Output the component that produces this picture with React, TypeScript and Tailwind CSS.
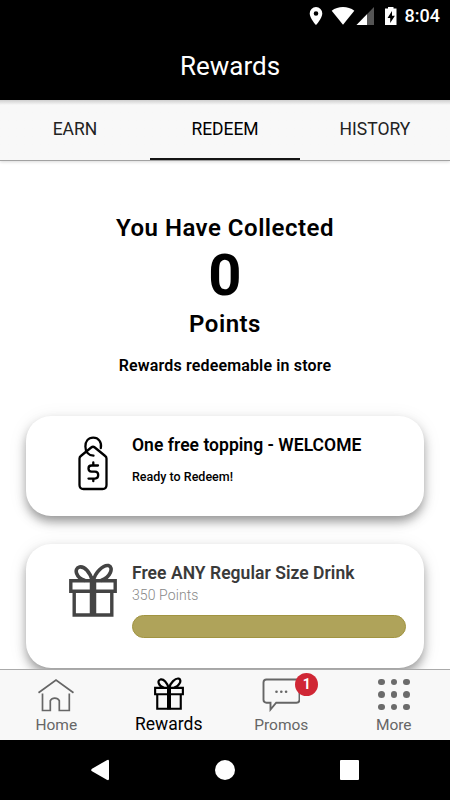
import { ReactNode } from "react";
import clsx from "clsx";

const GiftIcon = ({ className }: { className?: string }) => (
  <svg
    viewBox="0 0 48 54"
    preserveAspectRatio="none"
    fill="none"
    stroke="currentColor"
    className={className}
  >
    <path d="M1.800 17.800h44.400v10.400H1.800zM5.200 28.200h37.600v23.800H5.200z" strokeWidth="3.400" />
    <path d="M24 17v36" strokeWidth="6.500" />
    <path
      d="M23.500 18C21 9 15.500 3 10.500 4C4.500 5.500 7 15 16 17.500M24.500 18C25.500 9.500 34.500 1.500 39.500 2.600C45 4.200 41.500 14.500 32 17.500"
      strokeWidth="3.600"
    />
  </svg>
);

const TagIcon = () => (
  <svg
    viewBox="0 0 30 56"
    fill="none"
    stroke="#000"
    strokeWidth="2.300"
    strokeLinecap="round"
    strokeLinejoin="round"
    className="h-14 w-[30px]"
  >
    <path d="M13.200 12.500q1.800-1.500 3.600 0L27.200 21q1.300 1 1.300 2.500V50q0 4-4 4h-19q-4 0-4-4V23.500Q1.500 22 2.800 21z" />
    <path d="M22.800 13C24 7 20.500 2.700 15.200 2.700C10 2.700 7.400 6.500 7.400 11.500C7.400 17 10.500 20.500 15.500 20.700" />
    <path d="M20 30.500h-6.500q-3 0-3 3t3 3.100h3.500q3.200 0 3.200 3.500t-3.200 3.500H10.500M15.300 27.500v3M15.300 43.600v2.600" />
  </svg>
);

const HomeIcon = () => (
  <svg
    viewBox="0 0 38 34"
    fill="none"
    stroke="#666"
    strokeWidth="1.700"
    className="h-[34px] w-[38px]"
  >
    <path d="M1.500 14.800 19 2l17.500 12.800M5.500 15.500v17h7.800V22.700a5 4.500 0 0 1 9 0v9.800h10V15.500" />
  </svg>
);

const PromosIcon = () => (
  <svg
    viewBox="0 0 38 34"
    fill="none"
    stroke="#666"
    strokeWidth="1.900"
    className="h-[34px] w-[38px]"
  >
    <path d="M4.500 1.500h30q3 0 3 3v17.200q0 3-3 3H14.200L8.500 31.500v-6.800h-4q-3 0-3-3V4.500q0-3 3-3z" />
    <g fill="#666" stroke="none">
      <circle cx="14.500" cy="13.800" r="1.300" />
      <circle cx="19.300" cy="13.800" r="1.300" />
      <circle cx="24.100" cy="13.800" r="1.300" />
    </g>
  </svg>
);

const MoreIcon = () => (
  <div className="grid grid-cols-3 gap-[6px]">
    {Array.from({ length: 9 }, (_, i) => (
      <span key={i} className="size-[6.500px] rounded-full bg-[#6b6b6b]" />
    ))}
  </div>
);

const StatusBar = () => (
  <div className="flex h-8 items-center justify-end pr-[10px] text-white">
    <svg viewBox="0 0 88 20" className="mr-[8px] h-5 w-[88px]" fill="#fff">
      <path
        fillRule="evenodd"
        d="M7 1a6.300 6.300 0 0 0-6.300 6.400C.7 12 7 19 7 19s6.300-7 6.300-11.600A6.300 6.300 0 0 0 7 1zm0 4.200a2.300 2.300 0 1 1 0 4.600 2.300 2.300 0 0 1 0-4.600z"
      />
      <path d="M34 18.800 22.700 4.800c6.200-5 16.400-5 22.600 0z" />
      <path d="M65 1v18H47.500z" fill="#555" />
      <path d="M58 8.200V19H47.500z" />
      <path
        fillRule="evenodd"
        d="M79 1h5.500v1.500h3V19H76V2.500h3zM83 5l-4.500 7h2.700v5l4.700-7.200H83z"
      />
    </svg>
    <span className="text-[18px] leading-8 font-medium">8:04</span>
  </div>
);

const tabs = ["EARN", "REDEEM", "HISTORY"];

const Tabs = () => (
  <div className="relative z-10 flex h-[61px] border-b border-[#a2a2a2] bg-linear-to-b from-[#cfcfcf] to-[#f8f8f8] to-[5px] shadow-[0_1px_3px_rgba(0,0,0,0.15)]">
    {tabs.map((tab) => (
      <button
        key={tab}
        className={clsx(
          "flex-1 border-b-[2.500px] pt-px text-[17.500px] leading-[57px]",
          tab === "REDEEM"
            ? "border-[#151515] tracking-[-0.05px] text-black"
            : "border-transparent text-[#222]"
        )}
      >
        {tab}
      </button>
    ))}
  </div>
);

interface RewardCardProps {
  icon: ReactNode;
  className?: string;
  children: ReactNode;
}

const RewardCard = ({ icon, className, children }: RewardCardProps) => (
  <div
    className={clsx(
      "mx-[26px] flex rounded-[25px] bg-white pr-[18px] shadow-[0_6px_11px_-1px_rgba(0,0,0,0.4),0_3px_20px_rgba(0,0,0,0.08)]",
      className
    )}
  >
    <div className="flex w-[106px] shrink-0 justify-end">{icon}</div>
    <div className="flex-1 whitespace-nowrap">{children}</div>
  </div>
);

interface NavItemProps {
  label: string;
  icon: ReactNode;
  active?: boolean;
}

const NavItem = ({ label, icon, active }: NavItemProps) => (
  <button
    className={clsx(
      "flex flex-1 flex-col items-center",
      active ? "text-black" : "text-[#666]"
    )}
  >
    <span className="flex h-[44px] items-center">{icon}</span>
    <span
      className={clsx(
        "leading-4",
        active ? "text-[17.500px]" : "pt-px text-[15.500px]"
      )}
    >
      {label}
    </span>
  </button>
);

export default function App() {
  return (
    <div className="flex h-[800px] w-[450px] flex-col overflow-hidden bg-white font-[Roboto,sans-serif]">
      <header className="h-[100px] shrink-0 bg-black">
        <StatusBar />
        <h1 className="pl-[10px] text-center text-[26px] leading-[68px] text-white">
          Rewards
        </h1>
      </header>
      <Tabs />

      <main className="h-[508px] shrink-0 overflow-hidden text-black">
        <section className="flex h-[255px] flex-col items-center pt-[51px] font-medium">
          <p className="text-[24px] leading-8 font-semibold tracking-[0.5px]">
            You Have Collected
          </p>
          <p className="text-[58px] leading-[62px] font-bold">0</p>
          <p className="pt-[2px] text-[24px] leading-8 font-semibold tracking-[0.5px]">
            Points
          </p>
          <p className="pt-[16px] text-[16px] leading-5 font-semibold tracking-[0.15px]">
            Rewards redeemable in store
          </p>
        </section>

        <RewardCard
          className="h-[100px]"
          icon={
            <div className="pt-[19px] pr-[24px]">
              <TagIcon />
            </div>
          }
        >
          <h2 className="pt-[18px] text-[17.500px] leading-[22px] font-semibold tracking-[0.03px]">
            One free topping - WELCOME
          </h2>
          <p className="pt-[13px] text-[12.500px] leading-4 font-medium">
            Ready to Redeem!
          </p>
        </RewardCard>

        <RewardCard
          className="mt-7 h-[124px]"
          icon={
            <GiftIcon className="mt-[19px] mr-[15px] h-[54px] w-[48px] text-[#444]" />
          }
        >
          <h2 className="pt-[18px] text-[17.500px] leading-[22px] font-semibold tracking-[0.04px] text-[#3a3a3a]">
            Free ANY Regular Size Drink
          </h2>
          <p className="pt-[3px] text-[14px] leading-4 font-light tracking-[0.1px] text-[#888]">
            350 Points
          </p>
          <div className="mt-[12px] h-[23px] rounded-full border border-[#a19441] bg-[#afa35a]" />
        </RewardCard>
      </main>

      <nav className="relative flex h-[71px] shrink-0 border-t border-[#aaa] bg-[#f8f8f8] pt-[2px]">
        <NavItem
          label="Home"
          icon={
            <span className="pt-[2px]">
              <HomeIcon />
            </span>
          }
        />
        <NavItem
          label="Rewards"
          active
          icon={<GiftIcon className="mb-[1px] h-[33px] w-[30px]" />}
        />
        <NavItem
          label="Promos"
          icon={
            <span className="relative pt-[2px]">
              <PromosIcon />
              <span className="absolute -top-[3px] left-[33px] flex size-[23px] items-center justify-center rounded-full bg-[#d02735] text-[14px] font-bold text-white">
                1
              </span>
            </span>
          }
        />
        <NavItem
          label="More"
          icon={
            <span className="pt-[1px]">
              <MoreIcon />
            </span>
          }
        />
      </nav>

      <footer className="flex h-[60px] shrink-0 items-center bg-black pl-[91px]">
        <svg viewBox="0 0 18 22" className="h-[22px] w-[18px]" fill="#fff">
          <path d="M1 9.700 15.800 1.200q2.200-1 2.200 1v17.600q0 2-2.200 1L1 12.300q-1.700-1.300 0-2.600z" />
        </svg>
        <span className="ml-[106px] size-5 rounded-full bg-white" />
        <span className="ml-[105px] h-5 w-[19px] rounded-[1px] bg-white" />
      </footer>
    </div>
  );
}
